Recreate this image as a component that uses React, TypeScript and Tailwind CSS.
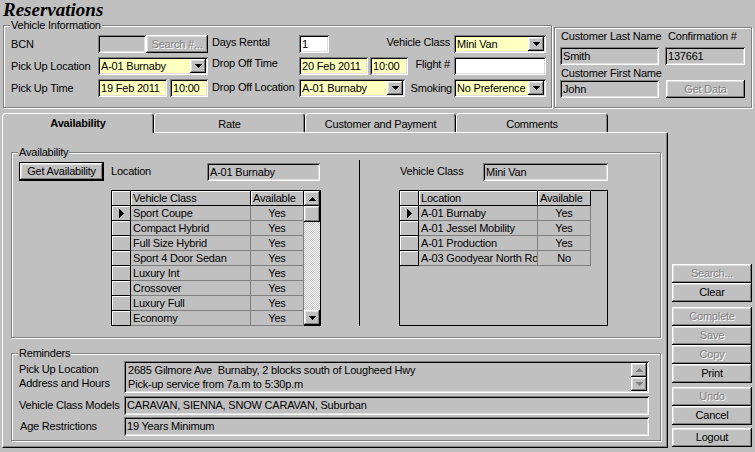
import React from 'react';

const sunken = 'shadow-[inset_1px_1px_0_#808080,inset_-1px_-1px_0_#fff,inset_2px_2px_0_#000,inset_-2px_-2px_0_#dfdfdf]';
const raised = 'shadow-[inset_-1px_-1px_0_#000,inset_1px_1px_0_#fff,inset_-2px_-2px_0_#808080,inset_2px_2px_0_#dfdfdf]';
const etched = 'border border-[#808080] shadow-[inset_1px_1px_0_#fff,1px_1px_0_#fff]';
const dim = 'text-[#808080] [text-shadow:1px_1px_0_#fff]';

const Down = ({ color = '#000' }: { color?: string }) => (
  <svg width="7" height="4" viewBox="0 0 7 4" shapeRendering="crispEdges">
    <path d="M0 0h7v1H0zM1 1h5v1H1zM2 2h3v1H2zM3 3h1v1H3z" fill={color} />
  </svg>
);

const Up = ({ color = '#000' }: { color?: string }) => (
  <svg width="7" height="4" viewBox="0 0 7 4" shapeRendering="crispEdges">
    <path d="M3 0h1v1H3zM2 1h3v1H2zM1 2h5v1H1zM0 3h7v1H0z" fill={color} />
  </svg>
);

const RowMark = () => (
  <svg width="5" height="9" viewBox="0 0 5 9" shapeRendering="crispEdges">
    <path d="M0 0h1v9H0zM1 1h1v7H1zM2 2h1v5H2zM3 3h1v3H3zM4 4h1v1H4z" fill="#000" />
  </svg>
);

type P = { className?: string; children?: React.ReactNode };

const Box = ({ className = '', children }: P) => (
  <div className={`${sunken} h-[18px] px-[3px] flex items-center whitespace-nowrap overflow-hidden ${className}`}>{children}</div>
);

const Combo = ({ className = '', children }: P) => (
  <div className={`${sunken} bg-[#ffffc0] h-[18px] p-[2px] flex ${className}`}>
    <span className="flex-1 pl-[1px] flex items-center whitespace-nowrap overflow-hidden">{children}</span>
    <span className={`${raised} bg-[#c0c0c0] w-[16px] flex items-center justify-center`}>
      <Down />
    </span>
  </div>
);

const Btn = ({ className = '', off, def, children }: P & { off?: boolean; def?: boolean }) => (
  <button
    type="button"
    className={`${raised} bg-[#c0c0c0] flex items-center justify-center whitespace-nowrap ${off ? dim : ''} ${def ? 'border border-black' : ''} ${className}`}
  >
    {children}
  </button>
);

const Lbl = ({ className = '', children }: P) => <span className={`whitespace-nowrap ${className}`}>{children}</span>;

const Group = ({ label, className = '', children }: P & { label?: string }) => (
  <div className={`relative ${etched} ${className}`}>
    {label && <span className="absolute -top-[7px] left-[6px] px-[1px] bg-[#c0c0c0] leading-[13px]">{label}</span>}
    {children}
  </div>
);

type Col = { w: string; label: string; center?: boolean };

const Grid = ({ cols, rows, scroll, className = '' }: { cols: Col[]; rows: string[][]; scroll?: boolean; className?: string }) => (
  <div className={`border border-black flex leading-[14px] ${className}`}>
    <div className="flex-1 flex flex-col">
      <div className="flex h-[15px]">
        <div className="w-[19px] border-r border-b border-black shadow-[inset_1px_1px_0_#fff]" />
        {cols.map(c => (
          <div key={c.label} className={`${c.w} border-r border-b border-black shadow-[inset_1px_1px_0_#fff] pl-[2px] whitespace-nowrap overflow-hidden`}>
            {c.label}
          </div>
        ))}
      </div>
      {rows.map((r, i) => (
        <div key={r[0]} className="flex h-[15px]">
          <div className="w-[19px] border-r border-b border-black shadow-[inset_1px_1px_0_#fff] flex items-center justify-center">
            {i === 0 && <RowMark />}
          </div>
          {r.map((v, j) => (
            <div
              key={j}
              className={`${cols[j].w} border-r border-b border-[#808080] whitespace-nowrap overflow-hidden ${cols[j].center ? 'text-center' : 'pl-[2px]'}`}
            >
              {v}
            </div>
          ))}
        </div>
      ))}
    </div>
    {scroll && (
      <div className="w-[16px] flex flex-col">
        <div className={`${raised} h-[15px] flex items-center justify-center`}>
          <Up />
        </div>
        <div className={`${raised} h-[16px]`} />
        <div className="flex-1 bg-[repeating-conic-gradient(#fff_0_25%,#c0c0c0_0_50%)] bg-[length:2px_2px]" />
        <div className={`${raised} h-[15px] flex items-center justify-center`}>
          <Down />
        </div>
      </div>
    )}
  </div>
);

const classRows = [
  ['Sport Coupe', 'Yes'],
  ['Compact Hybrid', 'Yes'],
  ['Full Size Hybrid', 'Yes'],
  ['Sport 4 Door Sedan', 'Yes'],
  ['Luxury Int', 'Yes'],
  ['Crossover', 'Yes'],
  ['Luxury Full', 'Yes'],
  ['Economy', 'Yes'],
];

const locationRows = [
  ['A-01 Burnaby', 'Yes'],
  ['A-01 Jessel Mobility', 'Yes'],
  ['A-01 Production', 'Yes'],
  ['A-03 Goodyear North Road', 'No'],
];

const tabBase = 'border-t border-l border-r border-t-white border-l-white border-r-black rounded-t-[4px] shadow-[inset_-1px_0_0_#808080] flex items-center justify-center';

export default function App() {
  return (
    <div className="w-[755px] h-[452px] bg-[#c0c0c0] overflow-hidden text-[11px] leading-[13px] tracking-[-0.2px] text-black font-['Liberation_Sans',Arial,sans-serif]">
      {/* Title */}
      <div className="h-[20px] pl-[3px] pt-[1px] font-['Liberation_Serif','Times_New_Roman',serif] text-[19px] leading-[18px] tracking-normal font-bold italic">
        Reservations
      </div>

      {/* Top row */}
      <div className="flex pl-[3px] mt-[5px]">
        <Group label="Vehicle Information" className="w-[549px] h-[83px] pt-[9px] pl-[7px] flex flex-col gap-[4px]">
          <div className="flex h-[18px] items-center">
            <Lbl className="w-[87px]">BCN</Lbl>
            <Box className="w-[48px]" />
            <Btn off className="w-[62px] h-[18px]">Search #...</Btn>
            <Lbl className="w-[87px] ml-[4px] mb-[4px]">Days Rental</Lbl>
            <Box className="w-[30px] bg-white">1</Box>
            <Lbl className="w-[125px] pr-[4px] text-right mb-[4px]">Vehicle Class</Lbl>
            <Combo className="w-[92px]">Mini Van</Combo>
          </div>
          <div className="flex h-[18px] items-center">
            <Lbl className="w-[87px]">Pick Up Location</Lbl>
            <Combo className="w-[110px]">A-01 Burnaby</Combo>
            <Lbl className="w-[87px] ml-[4px] mb-[6px]">Drop Off Time</Lbl>
            <Box className="w-[69px] bg-[#ffffc0]">20 Feb 2011</Box>
            <Box className="w-[38px] ml-[2px] bg-[#ffffc0]">10:00</Box>
            <Lbl className="w-[46px] pr-[4px] text-right mb-[4px]">Flight #</Lbl>
            <Box className="w-[92px] bg-white" />
          </div>
          <div className="flex h-[18px] items-center">
            <Lbl className="w-[87px]">Pick Up Time</Lbl>
            <Box className="w-[69px] bg-[#ffffc0]">19 Feb 2011</Box>
            <Box className="w-[38px] ml-[3px] bg-[#ffffc0]">10:00</Box>
            <Lbl className="w-[87px] ml-[4px] mb-[2px]">Drop Off Location</Lbl>
            <Combo className="w-[106px]">A-01 Burnaby</Combo>
            <Lbl className="w-[49px] pr-[2px] text-right">Smoking</Lbl>
            <Combo className="w-[92px]">No Preference</Combo>
          </div>
        </Group>

        <div className={`${etched} ml-[2px] mt-[2px] w-[198px] h-[81px] pl-[5px] pt-[1px] flex flex-col`}>
          <div className="flex h-[15px] items-center">
            <Lbl className="w-[105px] pl-[1px]">Customer Last Name</Lbl>
            <Lbl className="pl-[3px]">Confirmation #</Lbl>
          </div>
          <div className="flex gap-[6px] mt-[3px]">
            <Box className="w-[99px]">Smith</Box>
            <Box className="w-[80px]">137661</Box>
          </div>
          <div className="flex h-[13px] items-center mt-[2px] pl-[1px]">
            <Lbl>Customer First Name</Lbl>
          </div>
          <div className="flex">
            <Box className="w-[99px]">John</Box>
            <Btn off className="w-[79px] h-[18px] ml-[7px]">Get Data</Btn>
          </div>
        </div>
      </div>

      {/* Tabs + side buttons */}
      <div className="flex mt-[5px]">
        <div className="ml-[2px] w-[666px]">
          <div className="flex items-end h-[19px]">
            <div className={`${tabBase} relative z-10 -mb-px w-[152px] h-[20px] bg-[#c0c0c0] font-bold`}>Availability</div>
            <div className={`${tabBase} w-[151px] h-[19px] pt-[2px]`}>Rate</div>
            <div className={`${tabBase} w-[151px] h-[19px] pt-[2px]`}>Customer and Payment</div>
            <div className={`${tabBase} w-[152px] h-[19px] pt-[2px]`}>Comments</div>
          </div>

          <div className="h-[316px] border border-t-white border-l-white border-r-black border-b-black shadow-[inset_-1px_-1px_0_#808080] pl-[8px] pt-[19px]">
            <Group label="Availability" className="w-[650px] h-[186px] pt-[9px] pl-[7px] flex">
              <div className="w-[340px] flex flex-col">
                <div className="flex h-[19px]">
                  <Btn def className="w-[85px] h-[19px]">Get Availability</Btn>
                  <Lbl className="w-[96px] ml-[7px] self-center">Location</Lbl>
                  <Box className="w-[113px] mt-[1px]">A-01 Burnaby</Box>
                </div>
                <Grid
                  className="ml-[92px] mt-[9px] w-[210px] h-[136px]"
                  scroll
                  cols={[
                    { w: 'w-[120px]', label: 'Vehicle Class' },
                    { w: 'w-[53px]', label: 'Available', center: true },
                  ]}
                  rows={classRows}
                />
              </div>
              <div className="w-px h-[166px] -mt-[2px] bg-black" />
              <div className="ml-[39px] flex flex-col">
                <div className="flex h-[19px]">
                  <Lbl className="w-[84px] pl-[1px] self-center">Vehicle Class</Lbl>
                  <Box className="w-[125px] mt-[1px]">Mini Van</Box>
                </div>
                <Grid
                  className="mt-[9px] w-[209px] h-[136px]"
                  cols={[
                    { w: 'w-[119px]', label: 'Location' },
                    { w: 'w-[53px]', label: 'Available', center: true },
                  ]}
                  rows={locationRows}
                />
              </div>
            </Group>

            <Group label="Reminders" className="mt-[15px] w-[650px] h-[88px] pt-[7px] pl-[7px] flex flex-col">
              <div className="flex h-[32px]">
                <Lbl className="w-[105px] leading-[14px] pt-[1px]">
                  Pick Up Location
                  <br />
                  Address and Hours
                </Lbl>
                <div className={`${sunken} w-[525px] h-[32px] p-[2px] flex`}>
                  <div className="flex-1 pl-[2px] leading-[14px] whitespace-pre">
                    {'2685 Gilmore Ave  Burnaby, 2 blocks south of Lougheed Hwy\nPick-up service from 7a.m to 5:30p.m'}
                  </div>
                  <div className="w-[16px] flex flex-col">
                    <div className={`${raised} h-[14px] flex items-center justify-center`}>
                      <Up color="#808080" />
                    </div>
                    <div className={`${raised} h-[14px] flex items-center justify-center`}>
                      <Down color="#808080" />
                    </div>
                  </div>
                </div>
              </div>
              <div className="flex h-[19px] items-center mt-[3px]">
                <Lbl className="w-[105px]">Vehicle Class Models</Lbl>
                <Box className="w-[525px] h-[19px]">CARAVAN, SIENNA, SNOW CARAVAN, Suburban</Box>
              </div>
              <div className="flex h-[19px] items-center mt-[2px]">
                <Lbl className="w-[105px] pl-[1px]">Age Restrictions</Lbl>
                <Box className="w-[525px] h-[19px]">19 Years Minimum</Box>
              </div>
            </Group>
          </div>
        </div>

        <div className="ml-[4px] w-[80px] pt-[151px] flex flex-col">
          <Btn off className="h-[19px]">Search...</Btn>
          <Btn className="h-[19px]">Clear</Btn>
          <Btn off className="h-[19px] mt-[5px]">Complete</Btn>
          <Btn off className="h-[19px]">Save</Btn>
          <Btn off className="h-[19px]">Copy</Btn>
          <Btn className="h-[19px]">Print</Btn>
          <Btn off className="h-[19px] mt-[4px]">Undo</Btn>
          <Btn className="h-[19px]">Cancel</Btn>
          <Btn className="h-[19px] mt-[3px]">Logout</Btn>
        </div>
      </div>
    </div>
  );
}
